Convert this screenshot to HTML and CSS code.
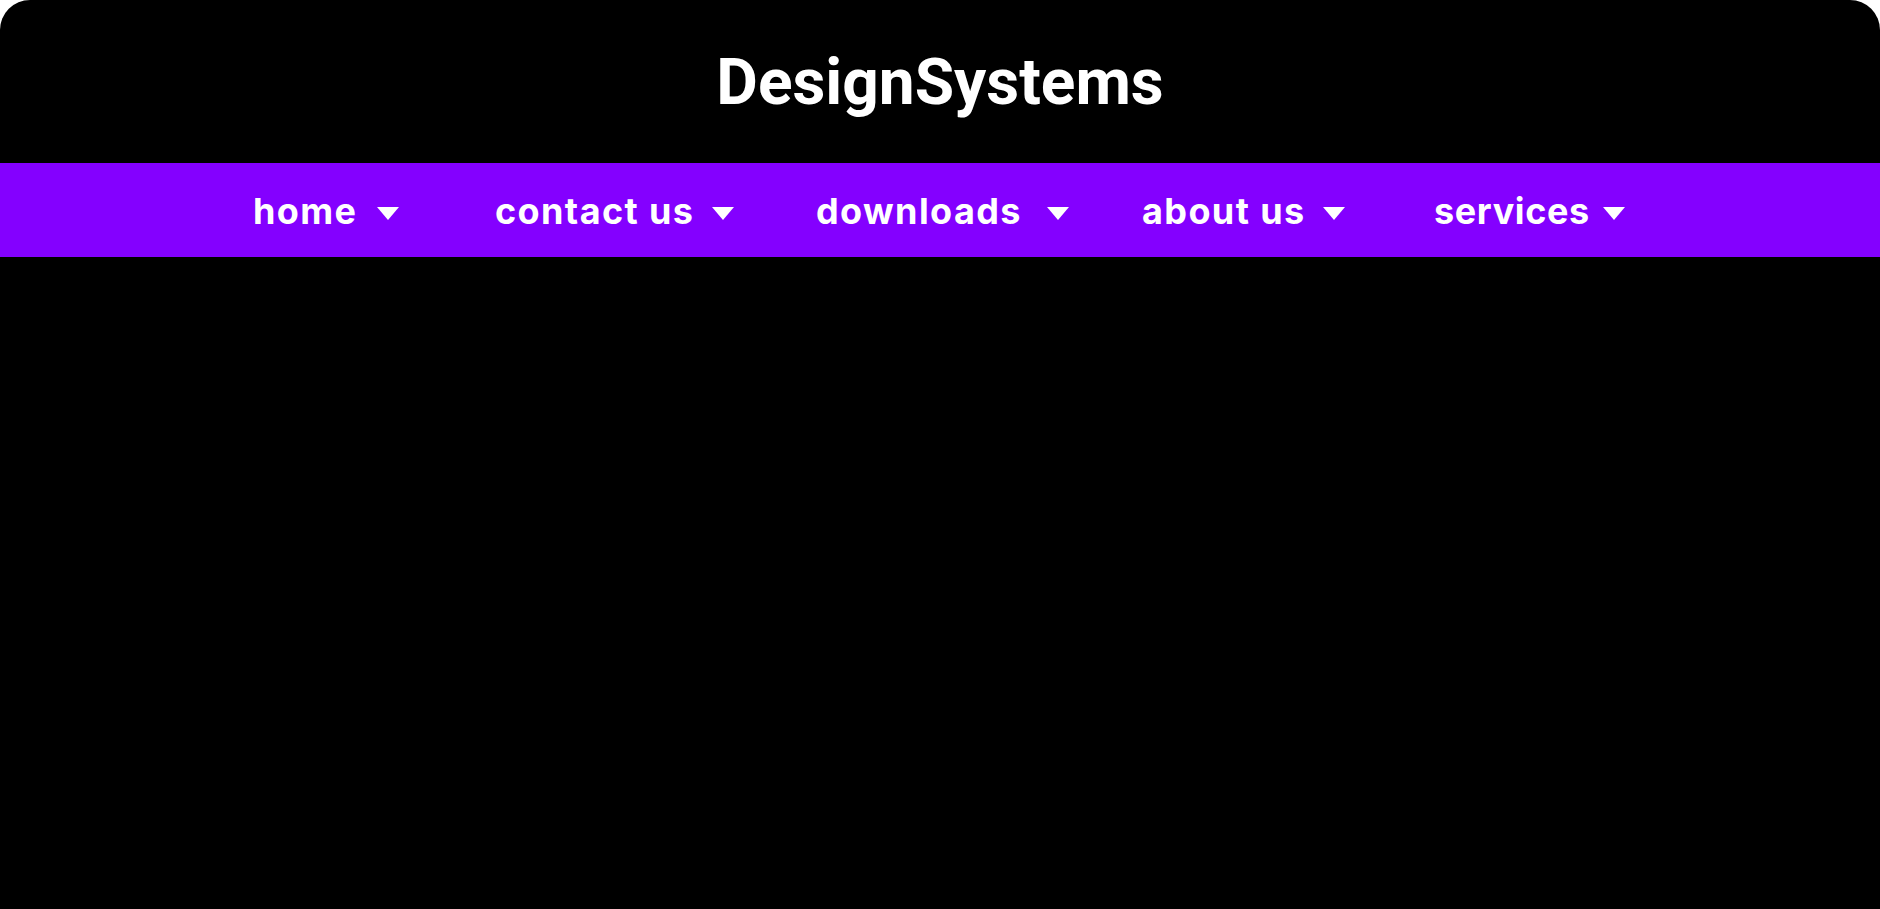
FILE: index.html
```html
<!DOCTYPE html>
<html lang="en">
<head>
<meta charset="utf-8">
<title>DesignSystems</title>
<link rel="stylesheet" href="styles.css">
</head>
<body>
<div class="frame">
  <header class="brand">
    <h1 class="brand-title">DesignSystems</h1>
  </header>
  <nav class="menu">
    <ul class="menu-list">
      <li class="menu-item item-home"><span class="menu-label">home</span><span class="caret"></span></li>
      <li class="menu-item item-contact"><span class="menu-label">contact us</span><span class="caret"></span></li>
      <li class="menu-item item-downloads"><span class="menu-label">downloads</span><span class="caret"></span></li>
      <li class="menu-item item-about"><span class="menu-label">about us</span><span class="caret"></span></li>
      <li class="menu-item item-services"><span class="menu-label">services</span><span class="caret"></span></li>
    </ul>
  </nav>
  <main class="content"></main>
</div>
</body>
</html>
```
FILE: styles.css
```css
html, body {
  margin: 0;
  padding: 0;
  background: #ffffff;
  overflow: hidden;
}

.frame {
  height: 100vh;
  background: #000000;
  border-radius: 30px 30px 0 0;
  display: flex;
  flex-direction: column;
  overflow: hidden;
}

.brand {
  height: 163px;
  flex-shrink: 0;
  display: flex;
  align-items: center;
  justify-content: center;
}

.brand-title {
  margin: 0;
  color: #ffffff;
  font-family: Roboto, "Liberation Sans", sans-serif;
  font-weight: 700;
  font-size: 64px;
  line-height: 1;
  padding-top: 2px;
}

.menu {
  height: 94px;
  flex-shrink: 0;
  background: #8400ff;
  display: flex;
  align-items: center;
}

.menu-list {
  list-style: none;
  margin: 0;
  padding: 0 0 0 253px;
  display: flex;
  align-items: center;
}

.menu-item {
  display: flex;
  align-items: center;
  gap: 20px;
  color: #ffffff;
  font-family: Inter, "Noto Sans", sans-serif;
  font-weight: 700;
  font-size: 36px;
  letter-spacing: 1.4px;
  padding-top: 2px;
}

.item-home { width: 242px; gap: 20px; }
.item-contact { width: 321px; gap: 18px; }
.item-downloads { width: 326px; gap: 25px; }
.item-about { width: 292px; gap: 17px; }
.item-services { gap: 13px; letter-spacing: 0.6px; }

.caret {
  width: 0;
  height: 0;
  border-left: 11px solid transparent;
  border-right: 11px solid transparent;
  border-top: 13px solid #ffffff;
  margin-top: 4px;
}

.content {
  flex: 1;
}
```
